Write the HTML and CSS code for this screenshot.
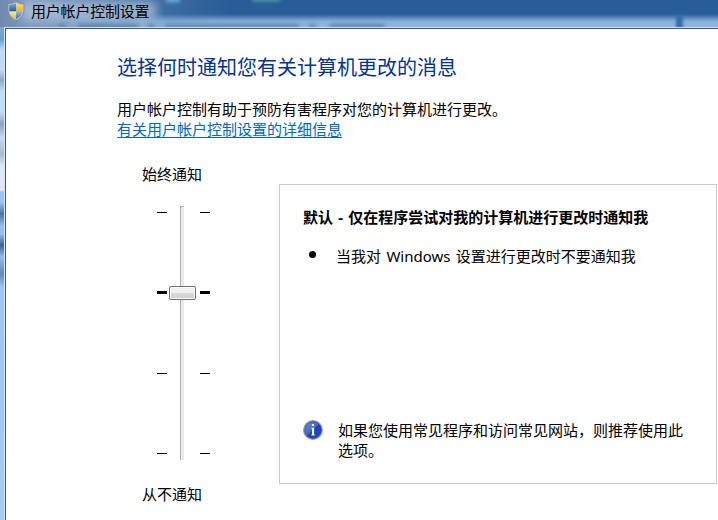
FILE: index.html
```html
<!DOCTYPE html>
<html lang="zh-CN">
<head>
<meta charset="utf-8">
<title>用户帐户控制设置</title>
<link rel="stylesheet" href="styles.css">
</head>
<body>
<div class="window">
  <header class="titlebar">
    <svg class="shield" viewBox="0 0 18 20">
      <defs>
        <clipPath id="shape"><path d="M9 2.2Q12 4 15.7 4V9Q15.3 15 9 18Q2.7 15 2.3 9V4Q6 4 9 2.2Z"/></clipPath>
        <linearGradient id="blue" x2="0" y2="1"><stop stop-color="#8fbbe8"/><stop offset="1" stop-color="#165dac"/></linearGradient>
        <linearGradient id="gold" x2="0" y2="1"><stop stop-color="#ffe98a"/><stop offset="1" stop-color="#f0ae18"/></linearGradient>
      </defs>
      <path d="M9 .6Q13 2.8 17 2.8V9Q16.8 16 9 19.6Q1.2 16 1 9V2.8Q5 2.8 9 .6Z" fill="#b8c2c9" stroke="#77858f" stroke-width=".7"/>
      <g clip-path="url(#shape)">
        <path d="M0 0H9V10.5H0Z" fill="url(#blue)"/><path d="M9 0H18V10.5H9Z" fill="url(#gold)"/>
        <path d="M0 10.5H9V20H0Z" fill="url(#gold)"/><path d="M9 10.5H18V20H9Z" fill="url(#blue)"/>
      </g>
    </svg>
    <span class="caption">用户帐户控制设置</span>
    <i class="blur glow"></i>
    <i class="blur spot-cyan"></i>
    <i class="blur spot-teal"></i>
    <i class="blur crumb crumb-a"></i>
    <i class="blur crumb crumb-b"></i>
    <i class="blur crumb crumb-c"></i>
    <i class="blur crumb crumb-d"></i>
    <i class="blur crumb crumb-e"></i>
    <i class="blur crumb crumb-f"></i>
    <i class="blur divider"></i>
  </header>
  <main class="client">
    <h1>选择何时通知您有关计算机更改的消息</h1>
    <p class="intro">用户帐户控制有助于预防有害程序对您的计算机进行更改。</p>
    <a class="link" href="#">有关用户帐户控制设置的详细信息</a>
    <div class="settings">
      <section class="level">
        <span class="label">始终通知</span>
        <div class="slider">
          <div class="ticks"><i></i><i class="current"></i><i></i><i></i></div>
          <div class="track"><b class="thumb"></b></div>
          <div class="ticks"><i></i><i class="current"></i><i></i><i></i></div>
        </div>
        <span class="label">从不通知</span>
      </section>
      <section class="panel">
        <h2>默认 - 仅在程序尝试对我的计算机进行更改时通知我</h2>
        <div class="item"><i class="bullet"></i><span>当我对 Windows 设置进行更改时不要通知我</span></div>
        <div class="advice">
          <svg class="info" viewBox="0 0 20 20">
            <defs><linearGradient id="ball" x2="1" y2="1"><stop stop-color="#6f94e4"/><stop offset=".48" stop-color="#3d66d2"/><stop offset=".52" stop-color="#1c41bd"/><stop offset="1" stop-color="#204cc8"/></linearGradient></defs>
            <circle cx="10" cy="10" r="9.2" fill="url(#ball)" stroke="#969ba6" stroke-width="1.5"/>
            <circle cx="10" cy="10" r="8.2" fill="none" stroke="#203b91" stroke-width=".6"/>
            <path d="M8.9 4H11.1V6.1H8.9ZM8.4 7.7H11.1V14.5H11.7V15.5H8.4V14.5H9V8.7H8.4Z" fill="#fff"/>
          </svg>
          <p>如果您使用常见程序和访问常见网站，则推荐使用此选项。</p>
        </div>
      </section>
    </div>
  </main>
</div>
</body>
</html>
```
FILE: styles.css
```css
* { box-sizing: border-box; }
body {
  margin: 0;
  font: 15px/20px "Noto Sans", "Noto Sans CJK SC", sans-serif;
  color: #000;
}
h1, h2, p { margin: 0; font-weight: 400; }
.window {
  width: 718px;
  height: 520px;
  overflow: hidden;
  padding-left: 4px;
  background:
    linear-gradient(#7891b3 0, #83a6cd 28px, #5fa6ce 39px, #bdd9f4 50px, #bed9f5 70px, #91a8c7 80px, #c2dcf7 91px, #c2dcf7 112px, #8ea2c2 124px, #c4dcf5 138px, #a9b8ce 154px, #dfe9f5 166px, #e3e7ef 190px, #9fc3eb 192px, #9ec4ed 202px, #526f9f 214px, #9ac0ea 226px, #9ac0ea 234px, #415e91 245px, #98bee9 257px, #6885b1 274px, #9fc5ee 287px, #a7cbf1 520px);
}
.titlebar {
  position: relative;
  display: flex;
  align-items: flex-start;
  gap: 6px;
  height: 27px;
  margin-left: -4px;
  padding: 1px 0 0 7px;
  overflow: hidden;
  background:
    linear-gradient(90deg, #7189ad 0, #7f9abe 30px, #7796be55 150px, transparent 230px),
    linear-gradient(#285c96 0, #285e98 14px, #4b7eb5 17px, #84aeda 21px, #91b8e2 27px);
}
.shield { width: 18px; height: 20px; z-index: 1; }
.caption { z-index: 1; height: 20px; line-height: 20px; letter-spacing: -.2px; }
.blur { position: absolute; filter: blur(2px); }
.glow { left: 22px; top: 2px; width: 134px; height: 18px; background: #b5c6dc; opacity: .75; filter: blur(5px); }
.spot-cyan { left: 166px; top: -5px; width: 14px; height: 7px; background: #6fb4dc; }
.spot-teal { left: 252px; top: -5px; width: 28px; height: 6px; background: #58a5a6; }
.crumb { top: 24px; height: 5px; background: #55799f; opacity: .8; }
.crumb-a { left: 59px; width: 7px; }
.crumb-b { left: 78px; width: 60px; }
.crumb-c { left: 148px; width: 6px; }
.crumb-d { left: 165px; width: 134px; }
.crumb-e { left: 309px; width: 7px; }
.crumb-f { left: 330px; width: 55px; }
.divider { left: 676px; top: 15px; width: 7px; height: 15px; background: #366da5; filter: blur(1.5px); }
.client {
  height: 493px;
  border-top: 1px solid #cbe0f6;
  border-left: 1px solid #d7e5f4;
  box-shadow: inset 1px 1px #41566f;
  background-color: #fff;
  padding: 28px 0 0 112px;
}
h1 { height: 43px; font-size: 20px; line-height: 24px; color: #003399; }
.intro { height: 20px; }
.link { display: block; width: max-content; height: 20px; color: #0066cc; text-underline-offset: 2px; text-decoration-thickness: 1px; }
.settings { display: flex; align-items: flex-start; padding-top: 25px; }
.level { width: 162px; padding-left: 25px; }
.label { display: block; height: 20px; }
.slider { display: flex; width: 53px; height: 255px; margin: 22px 0 23px 15px; justify-content: space-between; }
.ticks { display: flex; flex-direction: column; justify-content: space-between; width: 10px; height: 242px; margin-top: 6px; }
.ticks i { height: 1px; background: #000; }
.ticks .current { height: 3px; margin: -1px 0; }
.track { position: relative; left: -1.5px; width: 4px; height: 254px; background: #e7eaea; border-left: 1px solid #aeb0b0; border-top: 1px solid #aeb0b0; }
.thumb {
  position: absolute;
  left: -12px;
  top: 79px;
  width: 27px;
  height: 14px;
  border: 1px solid #707070;
  border-radius: 2px;
  box-shadow: inset 0 0 0 1px #fff;
  background: linear-gradient(#f1f1f1 50%, #dadada 50%, #cfcfcf);
}
.panel {
  display: flex;
  flex-direction: column;
  width: 438px;
  height: 300px;
  margin-top: 20px;
  border: 1px solid #c9c9c9;
  padding: 22px 23px 23px;
}
h2 { font-size: 15px; line-height: 20px; font-weight: 700; white-space: nowrap; word-spacing: 1.3px; }
.item { display: flex; align-items: center; gap: 20px; margin-top: 19px; padding-left: 6px; word-spacing: 1.5px; }
.bullet { width: 7px; height: 7px; margin-bottom: 3px; border-radius: 50%; background: #000; }
.advice { display: flex; align-items: flex-start; gap: 15px; margin-top: auto; }
.info { flex: none; width: 20px; height: 20px; }
.advice p { width: 348px; }
```
